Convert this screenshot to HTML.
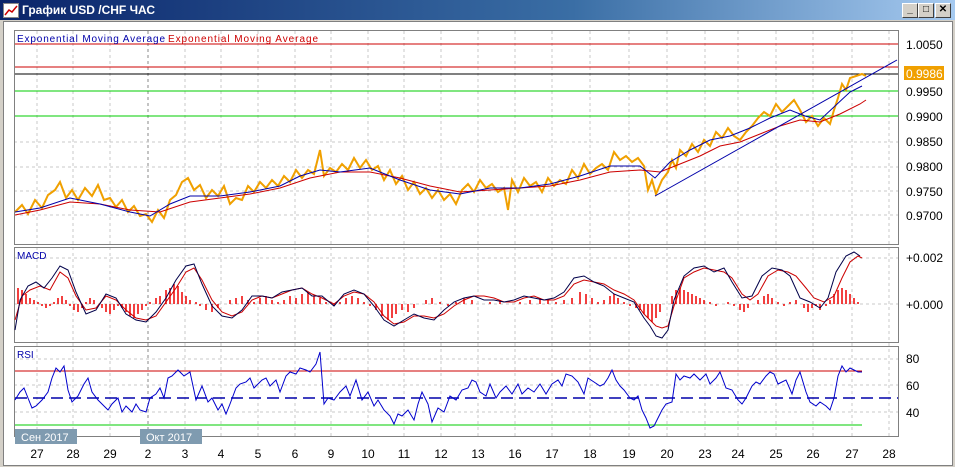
<!DOCTYPE html>
<html><head><meta charset="utf-8"><style>
body{margin:0;width:955px;height:467px;overflow:hidden;background:#d4d0c8;font-family:"Liberation Sans",sans-serif;}
.title{position:absolute;left:0;top:0;width:955px;height:20px;background:linear-gradient(90deg,#0a246a,#3a6ea5 60%,#a6caf0);color:#fff;font:bold 12px "Liberation Sans","Noto Sans CJK JP",sans-serif;}
.title span{position:absolute;left:22px;top:3px;}
.ico{position:absolute;left:3px;top:3px;width:14px;height:13px;background:#fff;border:1px solid #888;}
.btn{position:absolute;top:3px;width:14px;height:13px;background:#d4d0c8;border:1px solid;border-color:#fff #404040 #404040 #fff;font:bold 10px "Liberation Sans",sans-serif;text-align:center;line-height:12px;color:#000;}
.client{position:absolute;left:3px;top:21px;width:948px;height:443px;background:#fff;border:1px solid #808080;}
svg text{font-family:"Liberation Sans",sans-serif;}
</style></head><body>
<div class="title"><div class="ico"><svg width="14" height="13"><polyline points="1,11 5,6 8,8 13,2" fill="none" stroke="#c00" stroke-width="1.5"/></svg></div><span>График USD /CHF ЧАС</span>
<div class="btn" style="left:902px">_</div><div class="btn" style="left:918px">□</div><div class="btn" style="left:935px">✕</div></div>
<div class="client"></div>
<svg width="955" height="467" style="position:absolute;left:0;top:0">
<g stroke="#c8c8c8" stroke-dasharray="3,3" stroke-width="1">
<line x1="37" y1="31" x2="37" y2="436"/><line x1="73" y1="31" x2="73" y2="436"/><line x1="110" y1="31" x2="110" y2="436"/><line x1="148" y1="31" x2="148" y2="436" stroke="#888"/><line x1="185" y1="31" x2="185" y2="436"/><line x1="221" y1="31" x2="221" y2="436"/><line x1="258" y1="31" x2="258" y2="436"/><line x1="295" y1="31" x2="295" y2="436"/><line x1="331" y1="31" x2="331" y2="436"/><line x1="368" y1="31" x2="368" y2="436"/><line x1="404" y1="31" x2="404" y2="436"/><line x1="441" y1="31" x2="441" y2="436"/><line x1="478" y1="31" x2="478" y2="436"/><line x1="515" y1="31" x2="515" y2="436"/><line x1="552" y1="31" x2="552" y2="436"/><line x1="590" y1="31" x2="590" y2="436"/><line x1="629" y1="31" x2="629" y2="436"/><line x1="667" y1="31" x2="667" y2="436"/><line x1="705" y1="31" x2="705" y2="436"/><line x1="738" y1="31" x2="738" y2="436"/><line x1="776" y1="31" x2="776" y2="436"/><line x1="813" y1="31" x2="813" y2="436"/><line x1="852" y1="31" x2="852" y2="436"/><line x1="889" y1="31" x2="889" y2="436"/>
<line x1="14" y1="142" x2="898" y2="142"/><line x1="14" y1="167" x2="898" y2="167"/><line x1="14" y1="191" x2="898" y2="191"/><line x1="14" y1="215" x2="898" y2="215"/>
<line x1="14" y1="258" x2="898" y2="258"/><line x1="14" y1="304" x2="898" y2="304"/>
<line x1="14" y1="359" x2="898" y2="359"/><line x1="14" y1="385" x2="898" y2="385"/><line x1="14" y1="412" x2="898" y2="412"/>
</g>
<g fill="none" stroke="#808080"><rect x="14.5" y="30.5" width="884" height="214"/><rect x="14.5" y="247.5" width="884" height="95"/><rect x="14.5" y="346.5" width="884" height="90"/></g>
<line x1="15" y1="44" x2="898" y2="44" stroke="#c00"/><line x1="15" y1="67" x2="898" y2="67" stroke="#c00"/><line x1="15" y1="74" x2="898" y2="74" stroke="#000"/>
<line x1="15" y1="91" x2="898" y2="91" stroke="#0c0"/><line x1="15" y1="116" x2="898" y2="116" stroke="#0c0"/>
<polyline fill="none" stroke="#f0a000" stroke-width="2" points="15,212 22,205 28,214 35,200 42,208 48,195 55,190 60,182 66,198 72,190 78,200 85,188 92,196 98,185 104,200 110,198 116,207 122,200 128,212 134,206 140,216 146,214 152,222 158,210 164,218 170,200 176,195 182,182 188,178 194,190 200,185 206,198 212,190 218,196 224,186 230,204 236,198 242,200 248,186 254,192 260,182 266,188 272,180 278,186 284,176 290,182 296,170 302,178 308,170 314,174 320,150 324,176 330,168 336,172 342,164 348,170 354,158 360,168 366,160 372,170 378,166 384,180 390,170 396,184 402,176 408,190 414,182 420,194 426,188 432,198 438,190 444,200 450,194 456,204 462,190 468,184 474,192 480,180 486,188 492,184 498,192 504,188 508,210 512,180 518,192 524,178 530,186 536,182 542,192 548,178 554,186 560,180 566,184 572,170 578,178 584,164 590,174 596,168 602,164 608,170 614,152 620,160 626,156 632,162 638,158 644,166 648,190 652,180 656,194 662,180 668,172 672,160 676,168 680,150 686,156 692,144 698,152 704,140 710,146 716,132 722,138 728,128 734,136 740,140 746,132 752,126 758,118 764,112 770,116 776,104 782,112 788,106 794,100 800,110 806,122 812,116 818,126 824,118 830,124 834,110 838,98 842,84 846,90 850,78 856,76 862,74 866,76"/>
<polyline fill="none" stroke="#c00" stroke-width="1" points="15,215 40,210 70,202 100,204 130,210 160,212 190,202 220,198 250,194 280,188 310,178 340,172 370,172 400,178 430,186 460,192 490,190 520,188 550,186 580,180 610,172 640,170 660,172 680,164 700,156 720,146 740,142 760,134 780,126 800,120 820,122 840,114 860,104 866,100"/>
<polyline fill="none" stroke="#00a" stroke-width="1" points="15,212 40,208 70,198 100,204 130,212 150,216 170,204 190,196 220,196 250,192 280,186 300,176 320,170 340,172 370,168 400,180 430,190 460,194 490,188 520,188 550,184 580,176 610,166 640,166 655,178 670,162 690,150 710,140 730,136 750,128 770,118 790,110 805,116 820,120 835,106 850,92 862,86"/>
<line x1="655" y1="196" x2="897" y2="60" stroke="#00a"/>
<text x="17" y="42" font-size="10" fill="#00a" textLength="148" lengthAdjust="spacing">Exponential  Moving  Average</text><text x="168" y="42" font-size="10" fill="#c00" textLength="150" lengthAdjust="spacing">Exponential  Moving  Average</text>
<g font-size="12" fill="#000"><text x="906" y="49">1.0050</text><text x="906" y="96">0.9950</text><text x="906" y="121">0.9900</text><text x="906" y="146">0.9850</text><text x="906" y="171">0.9800</text><text x="906" y="196">0.9750</text><text x="906" y="220">0.9700</text></g>
<rect x="904" y="66" width="40" height="14" fill="#f0a000"/><text x="906" y="78" font-size="12" fill="#fff">0.9986</text>
<g stroke="#e00" stroke-width="1.5">
<path d="M18,304V288M22,304V290M26,304V294M30,304V298M34,304V300M38,304V302M42,304V306M46,304V308M50,304V306M54,304V302M58,304V298M62,304V296M66,304V300M70,304V306M74,304V310M78,304V312M82,304V308M86,304V302M90,304V298M94,304V300M98,304V304M102,304V308M106,304V312M110,304V314M114,304V310M118,304V306M122,304V308M126,304V312M130,304V316M134,304V318M138,304V314M142,304V310M146,304V306M150,304V302M156,304V298M160,304V296M166,304V290M170,304V288M174,304V284M178,304V286M182,304V292M186,304V296M190,304V300M196,304V302M200,304V306M206,304V310M212,304V312M218,304V308M224,304V304M230,304V300M236,304V298M242,304V296M248,304V300M254,304V302M260,304V298M266,304V296M272,304V300M278,304V302M284,304V300M290,304V296M296,304V298M302,304V294M308,304V292M314,304V296M320,304V298M326,304V302M334,304V306M340,304V302M346,304V298M352,304V296M358,304V298M364,304V302M370,304V306M376,304V310M382,304V316M388,304V320M392,304V318M396,304V314M402,304V310M408,304V312M414,304V308M420,304V304M426,304V300M432,304V298M440,304V302M448,304V306M456,304V302M464,304V298M472,304V300M480,304V304M490,304V302M500,304V300M510,304V304M520,304V302M530,304V300M540,304V298M548,304V300M556,304V302M564,304V300M572,304V298M580,304V292M586,304V294M592,304V298M598,304V302M604,304V300M610,304V296M614,304V294M618,304V298M624,304V302M630,304V306M636,304V308M640,304V310M644,304V314M648,304V318M652,304V322M656,304V318M660,304V312M666,304V304M672,304V296M676,304V290M680,304V288M684,304V290M688,304V292M692,304V294M696,304V296M700,304V298M704,304V300M710,304V302M716,304V306M722,304V304M728,304V302M734,304V306M740,304V310M744,304V312M748,304V308M752,304V304M758,304V300M764,304V296M768,304V294M772,304V298M778,304V302M784,304V306M790,304V302M796,304V300M804,304V308M808,304V312M812,304V308M816,304V306M820,304V310M826,304V306M830,304V300M834,304V294M838,304V290M842,304V288M846,304V290M850,304V294M854,304V298M858,304V302"/>
</g>
<polyline fill="none" stroke="#c00" points="15,320 22,296 30,290 40,286 50,290 60,272 68,278 76,296 86,310 96,308 106,296 116,300 126,310 136,318 146,320 156,316 166,302 176,288 186,272 194,268 202,280 212,300 222,312 232,316 242,312 252,300 262,296 272,298 282,294 292,290 302,288 312,294 322,298 334,304 344,296 354,292 364,294 374,302 384,316 394,324 404,322 414,316 424,316 434,318 444,314 454,306 464,300 474,296 484,296 494,298 504,302 514,302 524,298 534,296 544,300 554,300 564,296 574,284 584,280 594,282 604,284 614,290 624,294 634,300 644,314 650,320 656,326 662,328 668,326 674,306 684,278 694,272 704,268 714,270 724,272 732,278 742,294 750,300 758,294 768,276 778,270 788,272 796,276 806,288 814,298 824,302 834,296 842,278 850,262 858,256 862,258"/>
<polyline fill="none" stroke="#00004a" points="15,330 20,300 28,286 36,282 44,288 52,278 60,266 68,270 76,292 86,314 96,310 106,294 116,298 126,314 136,320 146,322 156,312 166,298 176,280 186,266 194,264 202,284 212,306 222,316 232,318 242,310 252,296 262,296 272,298 282,292 292,290 302,288 312,296 322,296 334,306 344,294 354,290 364,294 374,306 384,320 394,326 404,320 414,314 424,318 434,320 444,310 454,302 464,298 474,296 484,300 494,300 504,302 514,300 524,296 534,298 544,300 554,298 564,292 574,278 584,276 594,282 604,286 614,294 624,298 634,302 644,318 650,326 656,336 662,338 668,330 674,300 684,276 694,268 704,266 714,272 724,268 732,282 742,298 752,296 762,276 772,268 782,270 790,276 800,298 810,302 820,308 828,298 836,272 846,256 854,252 860,256"/>
<g font-size="12" fill="#000"><text x="906" y="262">+0.002</text><text x="906" y="309">+0.000</text></g>
<text x="17" y="259" font-size="10" fill="#00a">MACD</text>
<line x1="15" y1="371" x2="862" y2="371" stroke="#c00"/><line x1="15" y1="398" x2="898" y2="398" stroke="#00a" stroke-width="1.5" stroke-dasharray="12,6"/><line x1="15" y1="425" x2="862" y2="425" stroke="#0c0"/>
<polyline fill="none" stroke="#00c" points="15,400 20,392 24,388 28,398 32,408 36,406 42,400 48,392 52,378 56,368 60,372 64,366 68,390 72,402 78,396 84,384 88,378 92,392 98,400 104,406 108,410 112,404 118,398 122,412 126,406 132,412 136,404 140,410 146,412 150,398 156,394 160,388 164,398 168,378 172,376 178,370 184,376 190,372 196,400 202,386 208,402 212,398 218,410 222,404 226,414 230,404 236,388 240,384 246,382 250,378 254,388 258,384 262,380 266,378 270,386 276,380 280,392 286,376 290,372 296,374 300,368 306,370 310,372 316,364 320,352 324,404 328,398 334,400 340,392 346,386 350,396 356,380 362,400 368,392 374,406 378,400 384,410 390,416 394,424 398,414 402,416 408,410 414,420 418,404 422,392 428,404 432,422 438,408 444,412 450,396 456,400 462,390 468,388 472,380 476,382 480,392 486,396 490,384 496,398 500,392 506,386 512,394 518,384 522,394 528,388 534,392 540,384 546,394 552,384 558,380 562,386 566,374 572,376 578,382 584,394 588,378 594,382 600,386 604,384 608,378 612,370 616,380 620,386 624,390 630,398 634,400 638,396 642,410 646,418 650,428 654,426 658,418 662,410 666,404 672,402 676,374 680,380 684,376 690,378 694,374 700,380 706,374 710,384 716,378 720,372 726,388 732,390 738,400 742,404 746,398 752,386 756,382 760,384 766,376 770,372 774,374 778,384 782,382 786,380 792,394 796,380 800,372 806,392 810,402 816,406 820,402 826,406 830,410 834,398 838,376 842,366 846,372 850,368 854,370 858,372 862,372"/>
<g font-size="12" fill="#000"><text x="906" y="363">80</text><text x="906" y="390">60</text><text x="906" y="417">40</text></g>
<text x="17" y="358" font-size="10" fill="#00a">RSI</text>
<rect x="15" y="429" width="62" height="15" fill="#7f9bb0"/><text x="21" y="441" font-size="11" fill="#fff">Сен 2017</text>
<rect x="140" y="429" width="62" height="15" fill="#7f9bb0"/><text x="146" y="441" font-size="11" fill="#fff">Окт 2017</text>
<g font-size="12" fill="#000" text-anchor="middle"><text x="37" y="458">27</text><text x="73" y="458">28</text><text x="110" y="458">29</text><text x="148" y="458">2</text><text x="185" y="458">3</text><text x="221" y="458">4</text><text x="258" y="458">5</text><text x="295" y="458">6</text><text x="331" y="458">9</text><text x="368" y="458">10</text><text x="404" y="458">11</text><text x="441" y="458">12</text><text x="478" y="458">13</text><text x="515" y="458">16</text><text x="552" y="458">17</text><text x="590" y="458">18</text><text x="629" y="458">19</text><text x="667" y="458">20</text><text x="705" y="458">23</text><text x="738" y="458">24</text><text x="776" y="458">25</text><text x="813" y="458">26</text><text x="852" y="458">27</text><text x="889" y="458">28</text></g>
</svg>
</body></html>
